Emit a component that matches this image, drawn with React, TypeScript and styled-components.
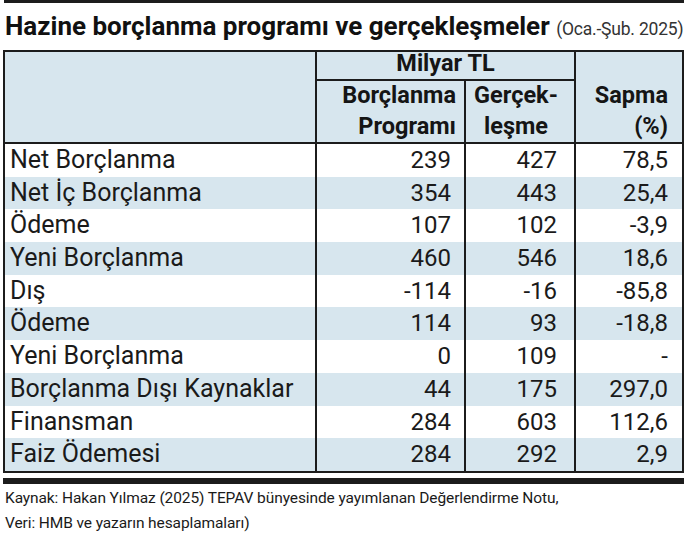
import React from "react";
import styled, { createGlobalStyle } from "styled-components";

const Global = createGlobalStyle`
  html, body { margin: 0; padding: 0; background: #ffffff; }
  body { font-family: Roboto, "Liberation Sans", sans-serif; color: #1b1b1b; }
`;

const BLUE = "#d7e6ee";
const LINE = "#1c1c1c";

const Page = styled.div`
  width: 688px;
  height: 536px;
  padding: 0 3px 0 3px;
  box-sizing: border-box;
  overflow: hidden;
`;

const TopRule = styled.div`
  height: 3px;
  background: ${LINE};
  margin: 0 1px 0 1px;
`;

const Title = styled.h1`
  margin: 0;
  padding: 8px 0 0 2px;
  height: 37px;
  box-sizing: border-box;
  font-size: 26px;
  line-height: 30px;
  font-weight: 700;
  color: #111;
  white-space: nowrap;
  letter-spacing: 0;
`;

const Sub = styled.span`
  font-size: 17.5px;
  font-weight: 400;
  color: #333;
  letter-spacing: -0.2px;
`;

const Table = styled.div`
  margin-top: 10px;
  width: 681px;
  border: 2px solid ${LINE};
  box-sizing: border-box;
`;

const cols = "310px 149px 110px 1fr";

const Head = styled.div`
  display: grid;
  grid-template-columns: ${cols};
  grid-template-rows: 29px 61px;
  background: ${BLUE};
  border-bottom: 2px solid ${LINE};
`;

const HCell = styled.div<{ $col: string; $row: string; $align?: string; $divider?: boolean; $under?: boolean; $pr?: number }>`
  grid-column: ${(p) => p.$col};
  grid-row: ${(p) => p.$row};
  border-left: ${(p) => (p.$divider ? `2px solid ${LINE}` : "none")};
  border-bottom: ${(p) => (p.$under ? `2px solid ${LINE}` : "none")};
  display: flex;
  flex-direction: column;
  justify-content: flex-end;
  align-items: ${(p) => p.$align || "center"};
  padding-right: ${(p) => p.$pr ?? 0}px;
  text-align: ${(p) => (p.$align === "flex-end" ? "right" : "center")};
  font-size: 23.5px;
  font-weight: 700;
  line-height: 31px;
  color: #151515;
  white-space: nowrap;
  box-sizing: border-box;
`;

const Row = styled.div<{ $alt: boolean }>`
  display: grid;
  grid-template-columns: ${cols};
  height: 32.7px;
  background: ${(p) => (p.$alt ? BLUE : "#ffffff")};
`;

const Label = styled.div`
  padding-left: 5px;
  font-size: 25px;
  line-height: 32.7px;
  font-weight: 400;
  white-space: nowrap;
  color: #1a1a1a;
`;

const Num = styled.div<{ $pr: number }>`
  border-left: 2px solid ${LINE};
  text-align: right;
  padding-right: ${(p) => p.$pr}px;
  font-size: 24px;
  line-height: 32.7px;
  font-weight: 400;
  color: #1a1a1a;
`;

const Bar = styled.div`
  margin-top: 5px;
  height: 6px;
  width: 681px;
  background: ${LINE};
`;

const Footer = styled.div`
  padding: 2px 0 0 2px;
  font-size: 15.5px;
  line-height: 25px;
  color: #1a1a1a;
  letter-spacing: -0.1px;
`;

const rows: [string, string, string, string][] = [
  ["Net Borçlanma", "239", "427", "78,5"],
  ["Net İç Borçlanma", "354", "443", "25,4"],
  ["Ödeme", "107", "102", "-3,9"],
  ["Yeni Borçlanma", "460", "546", "18,6"],
  ["Dış", "-114", "-16", "-85,8"],
  ["Ödeme", "114", "93", "-18,8"],
  ["Yeni Borçlanma", "0", "109", "-"],
  ["Borçlanma Dışı Kaynaklar", "44", "175", "297,0"],
  ["Finansman", "284", "603", "112,6"],
  ["Faiz Ödemesi", "284", "292", "2,9"],
];

export default function App() {
  return (
    <Page>
      <Global />
      <TopRule />
      <Title>
        Hazine borçlanma programı ve gerçekleşmeler <Sub>(Oca.-Şub. 2025)</Sub>
      </Title>
      <Table>
        <Head>
          <HCell $col="1" $row="1 / 3" />
          <HCell $col="2 / 4" $row="1" $divider $under>
            <span>Milyar TL</span>
          </HCell>
          <HCell $col="2" $row="2" $divider $align="flex-end" $pr={8}>
            <span>Borçlanma</span>
            <span>Programı</span>
          </HCell>
          <HCell $col="3" $row="2" $divider $pr={8}>
            <span>Gerçek-</span>
            <span>leşme</span>
          </HCell>
          <HCell $col="4" $row="1 / 3" $divider $align="flex-end" $pr={14}>
            <span>Sapma</span>
            <span>(%)</span>
          </HCell>
        </Head>
        {rows.map((r, i) => (
          <Row key={i} $alt={i % 2 === 1}>
            <Label>{r[0]}</Label>
            <Num $pr={13}>{r[1]}</Num>
            <Num $pr={17}>{r[2]}</Num>
            <Num $pr={14}>{r[3]}</Num>
          </Row>
        ))}
      </Table>
      <Bar />
      <Footer>
        Kaynak: Hakan Yılmaz (2025) TEPAV bünyesinde yayımlanan Değerlendirme Notu,
        <br />
        Veri: HMB ve yazarın hesaplamaları)
      </Footer>
    </Page>
  );
}
